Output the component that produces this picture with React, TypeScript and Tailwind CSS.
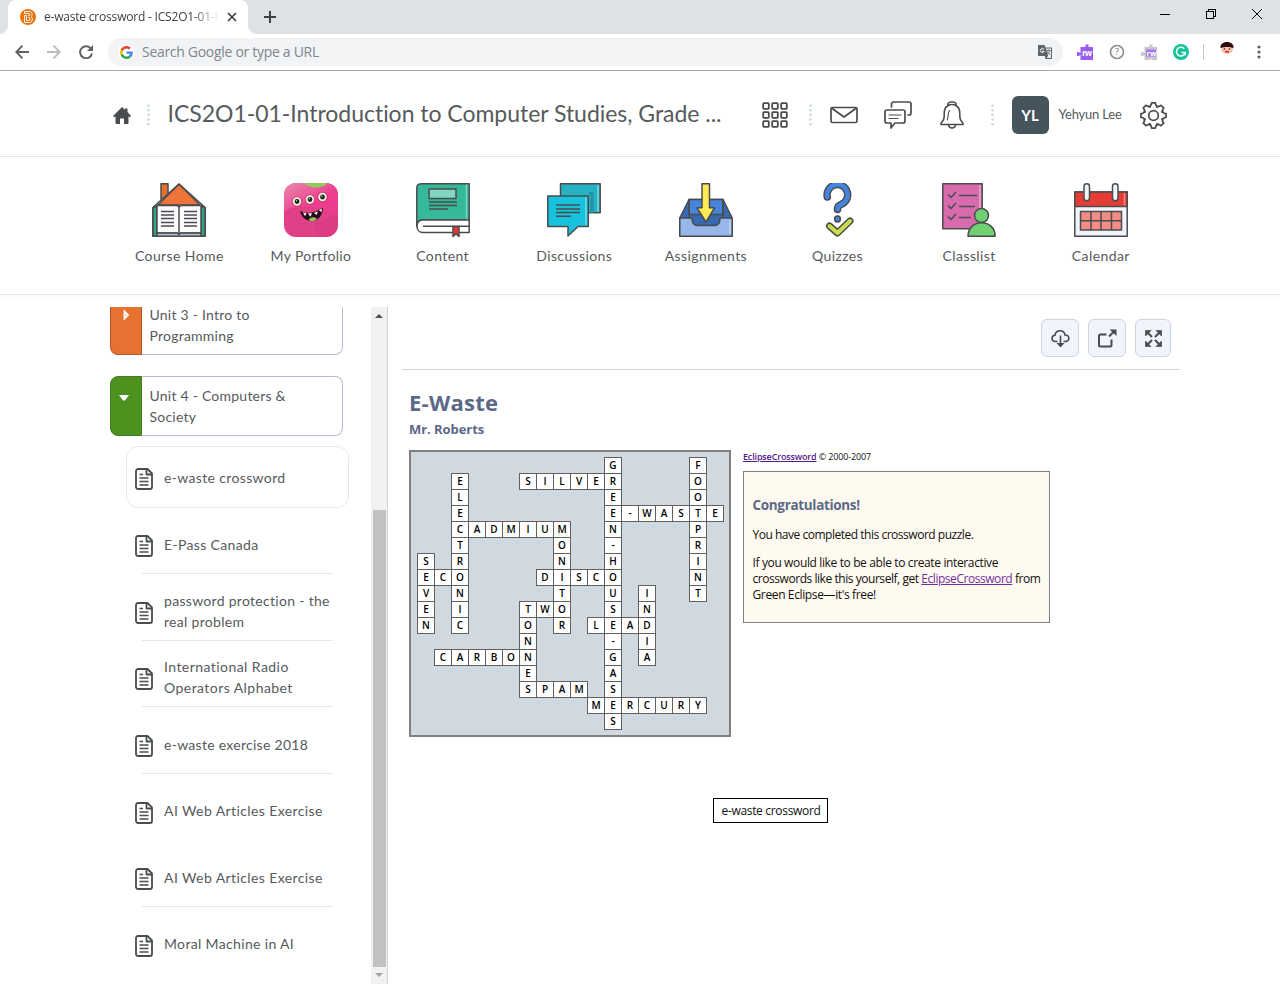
import React from "react";

const ui = "font-['Open_Sans','Noto_Sans',sans-serif]";
const ink = "#494c4e";

type Word = [string, number, number, "a" | "d"];
const words: Word[] = [
  ["GREEN-HOUSE-GASES", 11, 0, "d"],
  ["FOOTPRINT", 16, 0, "d"],
  ["ELECTRONIC", 2, 1, "d"],
  ["SILVER", 6, 1, "a"],
  ["E-WASTE", 11, 3, "a"],
  ["CADMIUM", 2, 4, "a"],
  ["MONITOR", 8, 4, "d"],
  ["SEVEN", 0, 6, "d"],
  ["ECO", 0, 7, "a"],
  ["DISCO", 7, 7, "a"],
  ["INDIA", 13, 8, "d"],
  ["TWO", 6, 9, "a"],
  ["TONNES", 6, 9, "d"],
  ["LEAD", 10, 10, "a"],
  ["CARBON", 1, 12, "a"],
  ["SPAM", 6, 14, "a"],
  ["MERCURY", 10, 15, "a"],
];

const cells = new Map<string, { x: number; y: number; ch: string }>();
words.forEach(([w, x, y, dir]) =>
  w.split("").forEach((ch, i) => {
    const cx = dir === "a" ? x + i : x;
    const cy = dir === "d" ? y + i : y;
    cells.set(`${cx},${cy}`, { x: cx, y: cy, ch });
  })
);

function BrowserChrome() {
  return (
    <div className={`${ui} shrink-0`}>
      <div className="flex h-[34px] items-start bg-[#dee1e6] pl-2">
        <div className="relative flex h-[34px] w-[240px] items-center rounded-t-lg bg-white pl-3">
          <span className="absolute -left-2 bottom-0 size-2 bg-[radial-gradient(circle_at_0_0,transparent_7.5px,white_8px)]" />
          <span className="absolute -right-2 bottom-0 size-2 bg-[radial-gradient(circle_at_100%_0,transparent_7.5px,white_8px)]" />
          <svg width="16" height="16" viewBox="0 0 16 16">
            <circle cx="8" cy="8" r="8" fill="#e87511" />
            <path d="M4.500 2.500h5c2.500 0 3.500 3.500 1.500 5 2.500 1.500 1.500 6-1.500 6h-5V6.500h2v5h2.500c1.500 0 1.500-3 0-3H8M4.500 2.500v2h4.500c1.200 0 1.200 2 0 2H8" fill="none" stroke="#fff" strokeWidth=".9" />
          </svg>
          <div className="ml-2 w-[174px] overflow-hidden whitespace-nowrap text-[12px] tracking-[-0.2px] text-[#3c4043] [mask-image:linear-gradient(to_right,black_148px,transparent_176px)]">
            e-waste crossword - ICS2O1-01-I
          </div>
          <svg className="ml-[9px]" width="10" height="10" viewBox="0 0 10 10" stroke="#3c4043" strokeWidth="1.700">
            <path d="M1 1l8 8M9 1l-8 8" />
          </svg>
        </div>
        <div className="ml-4 flex h-[34px] items-center">
          <svg width="12" height="12" viewBox="0 0 12 12" stroke="#3c4043" strokeWidth="2">
            <path d="M6 0v12M0 6h12" />
          </svg>
        </div>
        <div className="ml-auto flex h-[28px] items-center gap-9 pr-[18px] text-black">
          <svg width="10" height="10" viewBox="0 0 10 10"><path d="M0 5.500h10" stroke="currentColor" /></svg>
          <svg width="10" height="10" viewBox="0 0 10 10" fill="none" stroke="currentColor" shapeRendering="crispEdges">
            <path d="M.5 2.500h7v7h-7zM2.500 2.500v-2h7v7h-2" />
          </svg>
          <svg width="10" height="10" viewBox="0 0 10 10" stroke="currentColor"><path d="M0 0l10 10M10 0L0 10" /></svg>
        </div>
      </div>
      <div className="flex h-[37px] items-center border-b border-[#a9a9aa] bg-white">
        <svg className="ml-[15px]" width="14" height="14" viewBox="0 0 14 14" fill="none" stroke="#5f6368" strokeWidth="1.900"><path d="M14 7H1.500M7.500.7L1.300 7l6.200 6.300" /></svg>
        <svg className="ml-[18px]" width="14" height="14" viewBox="0 0 14 14" fill="none" stroke="#babcbe" strokeWidth="1.900"><path d="M0 7h12.500M6.500.7L12.700 7l-6.200 6.300" /></svg>
        <svg className="ml-[18px]" width="14" height="14" viewBox="0 0 14 14">
          <path d="M12 3.800A6 6 0 1 0 13 8.500" fill="none" stroke="#5f6368" strokeWidth="2" />
          <path d="M14 0v6H8z" fill="#5f6368" />
        </svg>
        <div className="ml-[15px] flex h-7 w-[955px] items-center rounded-full bg-[#f1f3f4] pl-2.5">
          <span className="flex size-4 items-center justify-center rounded-full bg-white">
            <svg width="13" height="13" viewBox="0 0 48 48">
              <path fill="#EA4335" d="M24 9.500c3.540 0 6.710 1.220 9.210 3.600l6.850-6.850C35.900 2.380 30.470 0 24 0 14.620 0 6.510 5.380 2.560 13.220l7.980 6.190C12.430 13.720 17.740 9.500 24 9.500z" />
              <path fill="#4285F4" d="M46.980 24.550c0-1.570-.15-3.090-.38-4.550H24v9.020h12.940c-.58 2.960-2.260 5.480-4.780 7.180l7.730 6c4.510-4.180 7.090-10.360 7.090-17.650z" />
              <path fill="#FBBC05" d="M10.530 28.590c-.48-1.450-.76-2.990-.76-4.590s.27-3.140.76-4.590l-7.980-6.190C.92 16.460 0 20.120 0 24c0 3.880.92 7.540 2.560 10.780l7.970-6.190z" />
              <path fill="#34A853" d="M24 48c6.480 0 11.930-2.130 15.890-5.810l-7.730-6c-2.150 1.450-4.920 2.300-8.160 2.300-6.260 0-11.570-4.220-13.470-9.910l-7.980 6.190C6.510 42.620 14.620 48 24 48z" />
            </svg>
          </span>
          <span className="ml-2 pb-px text-[14px] tracking-[-0.3px] text-[#80868b]">Search Google or type a URL</span>
          <svg className="ml-auto mr-[11px]" width="14" height="14" viewBox="0 0 14 14">
            <path d="M0 0h6.500l1 2.500H14V14H7.500L6.800 11H0z" fill="#5f6368" />
            <path d="M7.800 3.500h5.200V13H8.500l1.600-2z" fill="#e8eaed" />
            <path d="M8.300 5.500h4M10.300 4.500v1M11.800 5.500c-.5 2-1.500 3-3 4M9 6.500c.6 1.500 1.500 2.300 3 3" stroke="#5f6368" fill="none" strokeWidth=".9" />
            <path d="M6 4.300A2 2 0 1 0 6.200 6.200H4.300" stroke="#fff" fill="none" />
          </svg>
        </div>
        <svg className="ml-[14px]" width="16" height="16" viewBox="0 0 16 16">
          <path d="M3.500 3h5V.5h3V3H16v13H3.500v-5H2.500v1H0V8h2.500v1h1z" fill="#9b5cf6" />
          <text x="5" y="12" fontSize="8.500" fontWeight="700" fill="#fff" fontFamily="Open Sans" textLength="10">rw</text>
        </svg>
        <svg className="ml-4" width="16" height="16" viewBox="0 0 16 16">
          <circle cx="8" cy="8" r="6.500" fill="#fff" stroke="#8f8f8f" strokeWidth="1.700" />
          <text x="8" y="11.200" fontSize="9" textAnchor="middle" fill="#777" fontFamily="Open Sans">?</text>
        </svg>
        <svg className="ml-4" width="16" height="16" viewBox="0 0 16 16">
          <path d="M3.500 3h5V.5h3V3H16v13h-5l-1-2-1 2H3.500v-5H2.500v1H0V8h2.500v1h1z" fill="#c9c5c9" />
          <path d="M5 5.500h10v7H5z" fill="#a678ee" />
          <text x="5.500" y="11.500" fontSize="7.500" fontWeight="700" fill="#fff" fontFamily="Open Sans">rw</text>
        </svg>
        <svg className="ml-4" width="16" height="16" viewBox="0 0 16 16">
          <circle cx="8" cy="8" r="8" fill="#15c39a" />
          <path d="M11.300 4.800A4.400 4.400 0 1 0 12.200 8.500H8.500M12.200 8.300v3" fill="none" stroke="#fff" strokeWidth="1.500" />
        </svg>
        <span className="ml-3.5 h-4 w-px bg-[#c4c7ca]" />
        <svg className="-mt-2 ml-4" width="14" height="12" viewBox="0 0 14 12">
          <ellipse cx="7" cy="7" rx="6" ry="5" fill="#f6c5ad" />
          <path d="M.5 6C0 2.500 3 0 7 0s7 2.500 6.500 6C10 4.500 4 4.500 .5 6z" fill="#2d0d10" />
          <circle cx="4.500" cy="7" r=".8" fill="#422" /><circle cx="9.500" cy="7" r=".8" fill="#422" />
          <path d="M5 9.700h4" stroke="#e21f2d" strokeWidth="1.500" />
        </svg>
        <svg className="ml-[23px]" width="4" height="14" viewBox="0 0 4 14" fill="#5f6368">
          <circle cx="2" cy="2" r="1.600" /><circle cx="2" cy="7" r="1.600" /><circle cx="2" cy="12" r="1.600" />
        </svg>
      </div>
    </div>
  );
}

function Dots() {
  return (
    <svg width="3" height="22" viewBox="0 0 3 22" fill="#cdd9e2">
      {[1.5, 6.2, 10.900, 15.600, 20.300].map((y) => <circle key={y} cx="1.500" cy={y} r="1.300" />)}
    </svg>
  );
}

const gearPath = (() => {
  const pts: string[] = [];
  for (let i = 0; i < 8; i++) {
    const a = (i * Math.PI) / 4;
    const p = (r: number, d: number) => `${(13.5 + r * Math.sin(a + d)).toFixed(2)} ${(13.5 - r * Math.cos(a + d)).toFixed(2)}`;
    pts.push(`${i ? "L" : "M"}${p(10.9, -0.21)}L${p(12.7, -0.15)}L${p(12.7, 0.15)}L${p(10.9, 0.21)}Q${p(10.2, 0.27)} ${p(10.5, 0.3)}Q${p(7.6, 0.393)} ${p(10.5, 0.485)}Q${p(10.2, 0.515)} ${p(10.9, 0.575)}`);
  }
  return pts.join("") + "Z";
})();

function Header() {
  return (
    <header className="flex h-[86px] shrink-0 items-center border-b border-[#e3e6e8] pl-[113px] pt-[3px] text-[#565a5c]">
      <svg width="18" height="17" viewBox="0 0 18 17" fill={ink}>
        <path d="M9 0l3 2.800V1.500h2.500v3.600L18 9l-1.200 1.300-1.300-.8V16a1 1 0 0 1-1 1H11v-5.500H7V17H3.500a1 1 0 0 1-1-1V9.500l-1.300.8L0 9z" />
      </svg>
      <span className="ml-[16px]"><Dots /></span>
      <h1 className="ml-[17.500px] w-[556.500px] whitespace-nowrap pb-1 text-[23px] tracking-[-0.030px]">ICS2O1-01-Introduction to Computer Studies, Grade ...</h1>
      <svg className="ml-[37.500px]" width="26" height="26" viewBox="0 0 26 26" fill="none" stroke={ink} strokeWidth="1.800">
        {[0, 1, 2].map((r) => [0, 1, 2].map((c) => <rect key={`${r}${c}`} x={1.2 + c * 9} y={1.200 + r * 9} width="5.600" height="5.600" rx=".7" />))}
      </svg>
      <span className="ml-[21.500px]"><Dots /></span>
      <svg className="ml-[17.500px]" width="28" height="18" viewBox="0 0 28 18" fill="none" stroke={ink} strokeWidth="1.700" strokeLinejoin="round">
        <rect x="1" y="1.500" width="26" height="15" rx="1.500" /><path d="M1.500 2l12.500 9L26.500 2" />
      </svg>
      <svg className="ml-[26px]" width="28" height="28" viewBox="0 0 28 28" fill="none" stroke={ink} strokeWidth="1.700" strokeLinejoin="round" strokeLinecap="round">
        <path d="M7.500 6V3a2 2 0 0 1 2-2H25a2 2 0 0 1 2 2v9a2 2 0 0 1-2 2h-1" />
        <path d="M3 9h16a2 2 0 0 1 2 2v9a2 2 0 0 1-2 2h-8l-4 5v-5H3a2 2 0 0 1-2-2v-9a2 2 0 0 1 2-2z" />
        <path d="M5 14h12M5 17.500h9" strokeWidth="1" />
      </svg>
      <svg className="ml-[28px]" width="24" height="28" viewBox="0 0 24 28" fill="none" stroke={ink} strokeWidth="1.600" strokeLinejoin="round">
        <path d="M8 4.500V3q0-2 4-2t4 2v1.500M8 4.500Q12 2.500 16 4.500c4 2.500 3.800 6 3.800 10 0 4 .8 5.500 3.200 7.500v1.500H1V22c2.400-2 3.200-3.500 3.200-7.500 0-4-.2-7.500 3.800-10z" />
        <path d="M8.500 24c.5 4 6.500 4 7 0" /><path d="M7.500 19c.8-3.500.2-7 2-9.500" strokeWidth="1.100" strokeLinecap="round" />
      </svg>
      <span className="ml-[27px]"><Dots /></span>
      <span className="ml-[18px] flex h-[38px] w-[37px] items-center justify-center rounded-md bg-[#46545e] text-[15px] font-bold text-white">YL</span>
      <span className="ml-[10px] w-[63px] whitespace-nowrap text-[13px] tracking-[-0.200px]">Yehyun Lee</span>
      <svg className="ml-[18px]" width="27" height="27" viewBox="0 0 27 27" fill="none" stroke={ink} strokeWidth="1.700" strokeLinejoin="round">
        <path d={gearPath} /><circle cx="13.500" cy="13.500" r="4.800" />
      </svg>
    </header>
  );
}

function Icon({ children }: { children: React.ReactNode }) {
  return (
    <svg width="54" height="54" viewBox="0 0 54 54" stroke={ink} strokeWidth="1.500" strokeLinejoin="round" fill="none">{children}</svg>
  );
}

const navItems: { label: string; cls: string; icon: React.ReactNode }[] = [
  {
    label: "Course Home", cls: "tracking-[0.4px]", icon: (
      <Icon>
        <path d="M9 .8h7v14l-7 6z" fill="#e8702f" />
        <path d="M.8 24L27 1l26.200 23v29H.8z" fill="#fff" stroke="none" />
        <path d="M6 22L27 1l21 21z" fill="#ee7439" />
        <path d="M27 1L.8 24.500V53.200H5V23M27 1l26.200 23.500V53.200H49V23" />
        <path d="M1 25l4-2v30H1zM53 25l-4-2v30h4z" fill="#2fa483" />
        <path d="M5 22.500h20l2 1.500 2-1.500h20V50H29l-2 1-2-1H5z" fill="#fbfbfd" />
        <path d="M5 50h20l2 1.500 2-1.500h20v3.200H5z" fill="#aebcc8" />
        <path d="M27 24v27M9 28.500h13M9 32h13M9 35.500h13M9 39.500h13M9 43h13M32 28.500h13M32 32h13M32 35.500h13M32 39.500h13M32 43h13" />
      </Icon>
    )
  },
  {
    label: "My Portfolio", cls: "tracking-[0.35px]", icon: (
      <svg width="54" height="54" viewBox="0 0 54 54">
        <defs>
          <clipPath id="pf"><rect width="54" height="54" rx="12" /></clipPath>
          <linearGradient id="pg" x1="0" y1="0" x2=".6" y2=".6"><stop stopColor="#e98aac" /><stop offset="1" stopColor="#ec3d8e" /></linearGradient>
        </defs>
        <g clipPath="url(#pf)">
          <path fill="#e13f86" d="M0 0h54v54H0z" />
          <path fill="url(#pg)" d="M0 0h54v34C38 22 14 20 0 28z" />
          <path fill="#d93981" d="M30 40l24-10v24H32z" opacity=".5" />
          <path fill="#94c95b" d="M20 0h23c-3 6-18 6-23 0z" />
          {[[13, 18.500], [26, 16.500], [38.500, 14]].map(([x, y]) => (
            <g key={x}><circle cx={x} cy={y} r="5.300" fill="#c42f70" opacity=".6" /><circle cx={x} cy={y} r="4.200" fill="#f4f3dd" /><circle cx={x} cy={y} r="2.400" fill="#17261f" /><circle cx={x - .6} cy={y - .8} r=".6" fill="#fff" /></g>
          ))}
          <path d="M16 28c7 3.500 16 2 23-3.500 0 7-4.500 13.500-11 13.500S17.500 34 16 28z" fill="#2a0d18" />
          <path d="M19 29.500l3.500.8-1.500 3zM24 30.600l4-.3-1.600 3.500zM30 30l3.700-1.500-.9 3.500zM35 27.500l3-2-.5 3.500z" fill="#fff" />
          <path d="M24.500 36.800c2-3 6-3.500 8.500-1-2 2.700-6 3.200-8.500 1z" fill="#8dc455" />
        </g>
      </svg>
    )
  },
  {
    label: "Content", cls: "tracking-[0.4px]", icon: (
      <Icon>
        <path d="M5 .8h48.200V37H5Q1 38 .8 43V5Q1 1 5 .8z" fill="#35b99a" />
        <path d="M50.500 1.500v35" stroke="#7bd3be" />
        <path d="M53.200 37H7c-8 0-8 12.500 0 12.500h46.200z" fill="#fff" />
        <path d="M7 43.200h46.200" />
        <path d="M13 6h27v9.500H13z" fill="#81d5c1" />
        <path d="M13 19h28M13 22.500h28M13 26h19" />
        <path d="M37 43.500h6v10l-3-2.500-3 2.500z" fill="#e53935" />
      </Icon>
    )
  },
  {
    label: "Discussions", cls: "tracking-[0.38px]", icon: (
      <Icon>
        <path d="M13.500.8h39.700v29H13.500z" fill="#25b0c4" />
        <path d="M42 10.500h3V30" stroke="#2292a4" strokeWidth="3" />
        <path d="M.8 13h40.500v30.500H31L21 53v-9.500H.8z" fill="#17c3dc" />
        <path d="M39 14.500V42M51 2v26.500" stroke="#73d9e6" />
        <path d="M9 22h24M9 26h24M9 29.500h24M9 33.200h15" />
      </Icon>
    )
  },
  {
    label: "Assignments", cls: "tracking-[0.42px]", icon: (
      <Icon>
        <path d="M10 16.500h34L53.200 35v18H.8V35z" fill="#376ab0" />
        <path d="M10 16.500h34v15H10z" fill="#4684dd" />
        <path d="M10 16.500v18M44 16.500v18" />
        <path d="M.8 35H13c0 9 5 7.500 14 7.500S41 44 41 35h12.200v18.200H.8z" fill="#97b7ea" />
        <path d="M51 37v14" stroke="#c3d5f4" />
        <path d="M23 .8h7.500v24h5L27 39l-9-14.200h5z" fill="#fdea54" />
      </Icon>
    )
  },
  {
    label: "Quizzes", cls: "tracking-[0.4px]", icon: (
      <Icon>
        <g strokeLinecap="round">
          <path d="M16.300 14A10.300 10.300 0 1 1 30 21.500q-3.500 1-3.500 5" strokeWidth="7.500" />
          <path d="M16.300 14A10.300 10.300 0 1 1 30 21.500q-3.500 1-3.500 5" stroke="#4583df" strokeWidth="4.600" />
          <circle cx="26.500" cy="36" r="2.900" fill="#4583df" />
          <path d="M18.500 43l8 7 12.500-12" strokeWidth="7" />
          <path d="M18.500 43l8 7 12.500-12" stroke="#cddc4b" strokeWidth="4" />
        </g>
      </Icon>
    )
  },
  {
    label: "Classlist", cls: "tracking-[0.4px]", icon: (
      <Icon>
        <path d="M.8.8h39.400v45H.8z" fill="#d76bac" />
        <path d="M38 2v43" stroke="#eaa9d0" />
        <path d="M6 11.500l3 3 5-5.500M6 22.500l3 3 5-5.500M6 33.500l3 3 5-5.500M17 12.500h18M17 23.500h16M17 34.500h12" />
        <circle cx="39.500" cy="32.500" r="7" fill="#70cf72" />
        <path d="M26 53.200c0-18 27.200-18 27.200 0z" fill="#70cf72" />
      </Icon>
    )
  },
  {
    label: "Calendar", cls: "tracking-[0.4px]", icon: (
      <Icon>
        <path d="M.8 9h52.400v44.200H.8z" fill="#f1f4fa" />
        <path d="M.8 9h52.400v14.500H.8z" fill="#e53c35" />
        <path d="M50.500 10v12.500" stroke="#f28a86" />
        <path d="M6.500 28.500h41V47h-41z" fill="#f28c85" />
        <path d="M6.500 37.800h41M17 28.500V47M27 28.500V47M37.500 28.500V47" />
        <rect x="10" y=".8" width="5.500" height="17" rx="2.700" fill="#f1f4fa" />
        <rect x="38.500" y=".8" width="5.500" height="17" rx="2.700" fill="#f1f4fa" />
      </Icon>
    )
  },
];

function NavBar() {
  return (
    <nav className="h-[142px] shrink-0 border-b-[4px] border-[#f9fafb]">
      <div className="flex h-[138px] border-b border-[#e3e6e8] pl-[113.500px] pt-[26px]">
        {navItems.map((n) => (
          <div key={n.label} className="flex w-[131.650px] flex-col items-center">
            {n.icon}
            <span className={`mt-[9px] whitespace-nowrap text-[14px] leading-5 text-[#565a5c] ${n.cls}`}>{n.label}</span>
          </div>
        ))}
      </div>
    </nav>
  );
}

function DocIcon() {
  return (
    <svg className="shrink-0" width="18" height="22" viewBox="0 0 18 22" fill="none" stroke={ink} strokeWidth="1.800" strokeLinejoin="round">
      <path d="M3 1h9.500L17 5.500V19a2 2 0 0 1-2 2H3a2 2 0 0 1-2-2V3a2 2 0 0 1 2-2z" />
      <path d="M11.500 1v5.500H17" />
      <path d="M4.500 6.500H8M4.500 10h9M4.500 13.500h9M4.500 17h9" strokeWidth="1.400" />
    </svg>
  );
}

const topics: { lines: string[]; line: boolean; cls: string }[] = [
  { lines: ["E-Pass Canada"], line: true, cls: "tracking-[0.35px]" },
  { lines: ["password protection - the", "real problem"], line: true, cls: "tracking-[0.3px]" },
  { lines: ["International Radio", "Operators Alphabet"], line: true, cls: "tracking-[0.44px]" },
  { lines: ["e-waste exercise 2018"], line: true, cls: "tracking-[0.28px]" },
  { lines: ["AI Web Articles Exercise"], line: false, cls: "tracking-[0.4px]" },
  { lines: ["AI Web Articles Exercise"], line: true, cls: "tracking-[0.4px]" },
  { lines: ["Moral Machine in AI"], line: false, cls: "tracking-[0.34px]" },
];

function Sidebar() {
  return (
    <aside className="flex h-full w-[388px] shrink-0 border-r border-[#cbd2dc] text-[14px] leading-[21px] tracking-[0.350px] text-[#565a5c]">
      <div className="w-[371px] overflow-hidden pl-[110px]">
        <div className="flex h-12 w-[233px]">
          <div className="w-8 shrink-0 rounded-bl-lg border border-t-0 border-[#b8592c] bg-[#e57231]">
            <svg className="ml-[12px] mt-[3px]" width="7" height="10" viewBox="0 0 7 10"><path d="M1.500 1.500v7L5 5z" fill="none" stroke="#fff" strokeWidth="1.900" /></svg>
          </div>
          <div className="flex-1 rounded-br-lg border-b border-r border-[#b5bdd0] pl-[7.500px] tracking-[0.230px]"><div className="-mt-[3px]">Unit 3 - Intro to<br />Programming</div></div>
        </div>
        <div className="mt-[21px] flex h-[60px] w-[233px]">
          <div className="w-8 shrink-0 rounded-l-lg border border-[#437a22] bg-[#4d911e]">
            <svg className="ml-[8px] mt-[18px]" width="10" height="6" viewBox="0 0 10 6"><path d="M0 0h10L6 5.500H4z" fill="#fff" /></svg>
          </div>
          <div className="flex-1 rounded-r-lg border border-l-0 border-[#b5bdd0] pl-[7.500px] pt-[8px] tracking-[0.230px]">Unit 4 - Computers &amp;<br />Society</div>
        </div>
        <div className="ml-[15.500px] mt-[10px] flex h-[62px] w-[223.500px] items-center rounded-xl border border-[#e3e8f2] pl-[8px]">
          <span className="pt-1"><DocIcon /></span>
          <span className="pl-[11.500px]">e-waste crossword</span>
        </div>
        <div className="-mt-[0.700px]">
          {topics.map((t, i) => (
            <div key={i} className="flex h-[66.600px] flex-col">
              <div className="flex min-h-0 flex-1 items-center pl-[24.500px] pt-[8.400px]">
                <span className="pt-1"><DocIcon /></span>
                <span className={`pl-[11.500px] ${t.cls}`}>{t.lines.map((l) => <span key={l} className="block whitespace-nowrap">{l}</span>)}</span>
              </div>
              <div className={t.line ? "ml-8 h-px w-[191px] bg-[#e3e6ea]" : "h-px"} />
            </div>
          ))}
        </div>
      </div>
      <div className="flex h-full w-4 flex-col items-center bg-[#f1f1f1]">
        <svg className="mt-[7px]" width="8" height="4" viewBox="0 0 8 4"><path d="M4 0l4 4H0z" fill="#505050" /></svg>
        <div className="mt-[192px] h-[457px] w-[13px] bg-[#c1c1c1]" />
        <svg className="mt-[6px]" width="8" height="4" viewBox="0 0 8 4"><path d="M4 4l4-4H0z" fill="#a3a3a3" /></svg>
      </div>
    </aside>
  );
}

function Crossword() {
  return (
    <div className="grid h-[287px] w-[322px] shrink-0 grid-cols-[repeat(18,17px)] grid-rows-[repeat(17,16px)] border-2 border-[#808080] bg-[#d0d8e0] pl-[6px] pt-[5px]">
      {[...cells.values()].map((c) => (
        <div key={`${c.x},${c.y}`} className="flex h-[17px] w-[18px] items-center justify-center border border-[#606060] bg-white pb-px text-[10px] font-semibold leading-none text-black" style={{ gridColumnStart: c.x + 1, gridRowStart: c.y + 1 }}>
          {c.ch}
        </div>
      ))}
    </div>
  );
}

function Content() {
  const btn = "flex h-[38px] items-center justify-center rounded-md border border-[#cdd5dc] bg-[#f1f4fa]";
  return (
    <main className={`${ui} min-w-0 flex-1 pl-[14px] pt-3`}>
      <div className="flex h-[51px] w-[778px] justify-end gap-[9px] border-b border-[#cdd5dc] pr-[9px]">
        <div className={`${btn} w-[38px]`}>
          <svg width="19" height="19" viewBox="0 0 19 19" fill="none" stroke={ink} strokeWidth="1.600">
            <path d="M6.500 12.500H4.500C0 12.500 0 6.500 4 6.200 5 .5 13 .3 14 6c5 0 5 6.500.5 6.500h-2M9.500 6.500V15" />
            <path d="M5.500 14h8l-4 4.500z" fill={ink} stroke="none" />
          </svg>
        </div>
        <div className={`${btn} w-[38px]`}>
          <svg width="19" height="19" viewBox="0 0 19 19" fill="none" stroke={ink} strokeWidth="2">
            <path d="M8.500 5.500H2.500a1.500 1.500 0 0 0-1.500 1.500v9A1.500 1.500 0 0 0 2.500 17.500h9.500a1.500 1.500 0 0 0 1.500-1.500v-5.500M11 7.500l5-5" />
            <path d="M11.500.5H18.500v6.500z" fill={ink} stroke="none" />
          </svg>
        </div>
        <div className={`${btn} w-[36px]`}>
          <svg width="17" height="17" viewBox="0 0 17 17" fill={ink} stroke={ink}>
            <path d="M.5.5h5.500l-5.500 5.500zM16.500.5v5.500l-5.500-5.500zM.5 16.500v-5.500l5.500 5.500zM16.500 16.500h-5.500l5.500-5.500z" strokeWidth=".7" />
            <path d="M3 3l4 4M14 3l-4 4M3 14l4-4M14 14l-4-4" strokeWidth="2" />
          </svg>
        </div>
      </div>
      <div className="pl-[7px]">
        <h2 className="mt-[16px] text-[22px] font-bold leading-[32px] tracking-[0.250px] text-[#5b6987]">E-Waste</h2>
        <h3 className="mt-[1px] text-[13px] font-bold leading-[20px] tracking-[-0.060px] text-[#5b6987]">Mr. Roberts</h3>
        <div className="mt-[11px] flex items-start">
          <Crossword />
          <div className="ml-3 text-[#111]">
            <p className="text-[9px] leading-[13px] tracking-[-0.150px]"><a className="font-semibold text-[#551a8b] underline">EclipseCrossword</a> © 2000-2007</p>
            <div className="mt-2 h-[152px] w-[307px] whitespace-nowrap border border-[#808080] bg-[#fffaf0] pl-[8.500px] text-[12px] leading-4 tracking-[-0.480px]">
              <h4 className="mt-[23px] text-[13.500px] font-bold leading-[20px] tracking-[-0.330px] text-[#5b6987]">Congratulations!</h4>
              <p className="mt-3">You have completed this crossword puzzle.</p>
              <p className="mt-3 tracking-[-0.370px]">If you would like to be able to create interactive<br /><span className="tracking-[-0.450px]">crosswords like this yourself, get <a className="text-[#7030a0] underline">EclipseCrossword</a> from</span><br />Green Eclipse—it's free!</p>
            </div>
          </div>
        </div>
        <div className="ml-[304px] mt-[61px] flex h-[25px] w-[115px] items-center justify-center whitespace-nowrap border border-black pl-px text-[12px] tracking-[-0.320px] text-[#111]">e-waste crossword</div>
      </div>
    </main>
  );
}

export default function App() {
  return (
    <div className="flex h-[984px] w-[1280px] flex-col overflow-hidden bg-white font-['Lato','Open_Sans',sans-serif]">
      <BrowserChrome />
      <Header />
      <NavBar />
      <div className="flex min-h-0 flex-1 pt-2">
        <Sidebar />
        <Content />
      </div>
    </div>
  );
}
